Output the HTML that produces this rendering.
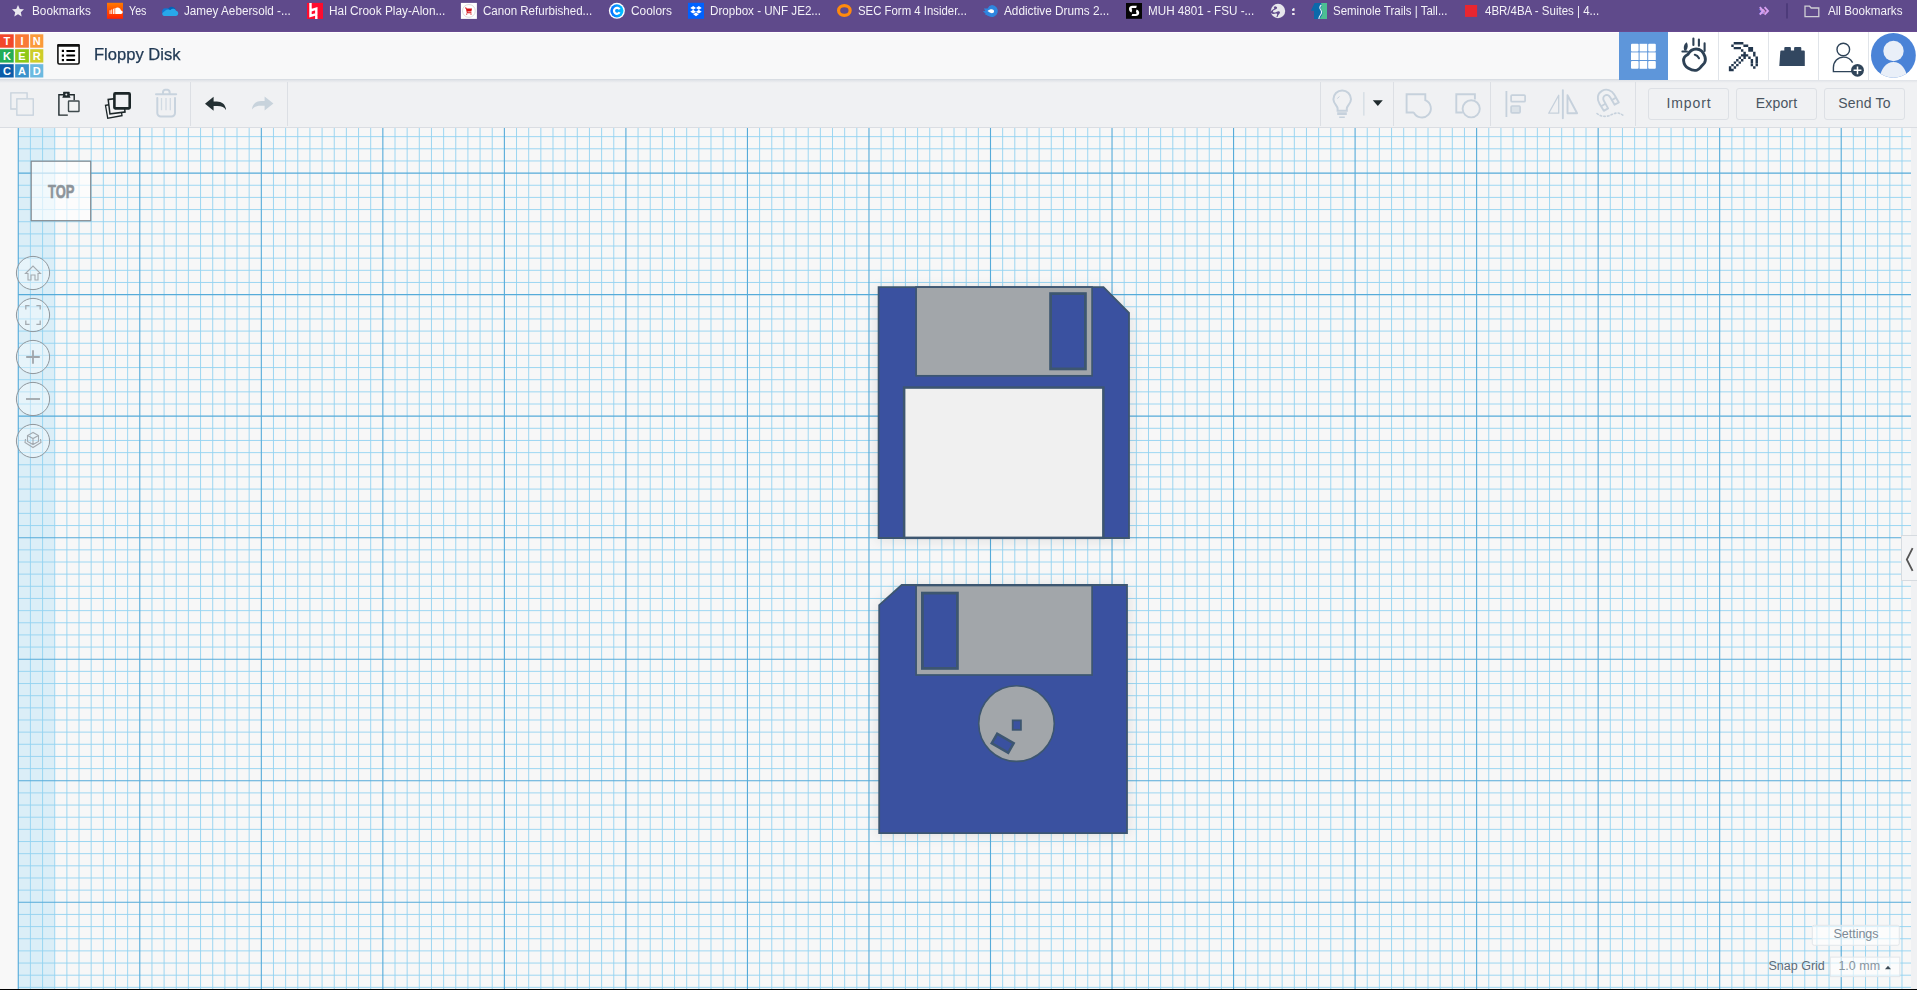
<!DOCTYPE html>
<html><head><meta charset="utf-8">
<style>
*{margin:0;padding:0;box-sizing:border-box}
html,body{width:1917px;height:990px;overflow:hidden;background:#f8f8f8;font-family:"Liberation Sans",sans-serif}
.abs{position:absolute}
#bm{position:absolute;left:0;top:0;width:1917px;height:32px;background:#5f4a8b;border-bottom:1px solid #684a90}
#bm .t{position:absolute;top:5px;transform-origin:0 0;font-size:12px;line-height:12px;color:#f4f2f8;white-space:nowrap}
#bm .ic{position:absolute;top:3px;width:16px;height:16px}
#hdr{position:absolute;left:0;top:32px;width:1917px;height:48px;background:#f8f8f9;border-top:1px solid #fff;border-bottom:1px solid #d9dde3}
#tb{position:absolute;left:0;top:80px;width:1917px;height:48px;background:#f0f1f3;border-bottom:1px solid #dadde2}
.sep{position:absolute;top:82px;width:1px;height:44px;background:#dcdfe4}
#canvas{position:absolute;left:0;top:128px;width:1917px;height:862px;background:#f8f8f8}
.btn{position:absolute;top:88px;height:32px;width:81px;border:1px solid #dde0e5;border-radius:3px;font-size:14px;color:#4a5561;text-align:center;line-height:28px}
</style></head><body>
<div id="bm">
  <div class="t" style="left:32px;transform:scaleX(0.98)">Bookmarks</div>
  <div class="t" style="left:129px;transform:scaleX(0.89)">Yes</div>
  <div class="t" style="left:184px;transform:scaleX(0.975)">Jamey Aebersold -...</div>
  <div class="t" style="left:329px;transform:scaleX(0.986)">Hal Crook Play-Alon...</div>
  <div class="t" style="left:483px;transform:scaleX(0.963)">Canon Refurbished...</div>
  <div class="t" style="left:631px;transform:scaleX(0.99)">Coolors</div>
  <div class="t" style="left:710px;transform:scaleX(0.968)">Dropbox - UNF JE2...</div>
  <div class="t" style="left:858px;transform:scaleX(0.949)">SEC Form 4 Insider...</div>
  <div class="t" style="left:1004px;transform:scaleX(0.981)">Addictive Drums 2...</div>
  <div class="t" style="left:1148px;transform:scaleX(0.972)">MUH 4801 - FSU -...</div>
  <div class="t" style="left:1292px">:</div>
  <div class="t" style="left:1333px;transform:scaleX(0.957)">Seminole Trails | Tall...</div>
  <div class="t" style="left:1485px;transform:scaleX(0.958)">4BR/4BA - Suites | 4...</div>
  <div class="t" style="left:1759px;color:#d8a4f2">»</div>
  <div class="t" style="left:1828px;transform:scaleX(0.971)">All Bookmarks</div>
  <svg class="abs" style="left:0;top:0" width="1917" height="31">
    <defs>
      <linearGradient id="sc" x1="0" y1="0" x2="0" y2="1"><stop offset="0" stop-color="#ff7a00"/><stop offset="1" stop-color="#ff2200"/></linearGradient>
      <linearGradient id="co" x1="0" y1="0" x2="1" y2="0"><stop offset="0" stop-color="#0a6cff"/><stop offset="1" stop-color="#00c4ff"/></linearGradient>
    </defs>
    <!-- star -->
    <path fill="#e9e7ef" d="M18 5l1.75 3.9 4.25.45-3.2 2.85.9 4.2L18 14.25l-3.7 2.15.9-4.2L12 9.35l4.25-.45z"/>
    <!-- soundcloud -->
    <rect x="107" y="2.8" width="16" height="16" fill="url(#sc)"/>
    <path fill="#fff" d="M115.5 14h5.3a1.8 1.8 0 0 0 .2-3.6 3.6 3.6 0 0 0-5.5-2.2z M109.6 10.3h.9v3.6h-.9zM111.3 9.6h.9v4.3h-.9zM113 8.8h.9v5.1h-.9zM114.5 8.3h.8v5.6h-.8z"/>
    <!-- onedrive -->
    <path fill="#0364b8" d="M168.6 8.2a4.3 4.3 0 0 1 7.2 1.6l-5 3.6-4.4-2z"/>
    <path fill="#0f78d4" d="M162.4 13a3.2 3.2 0 0 1 3.3-4.6 4.6 4.6 0 0 1 3.3.6l-1.5 7h-3.2z"/>
    <path fill="#28a8ea" d="M164.2 16a2.2 2.2 0 0 1-1.8-3l3-2.6a4.8 4.8 0 0 1 5.1-.3 3.2 3.2 0 0 1 5.6.6 3 3 0 0 1 1.9 3.8 2.2 2.2 0 0 1-2 1.5z"/>
    <!-- hal crook -->
    <rect x="307" y="2.9" width="16" height="16" fill="#ff0b2e"/>
    <path fill="none" stroke="#fff" stroke-width="2.4" d="M310.5 2.9v13l5.8-1.8V8.7l-5.8 1.8 M316.3 8.7v10.2"/>
    <!-- canon -->
    <rect x="460.9" y="2.9" width="16" height="16" fill="#fff"/>
    <circle cx="468.9" cy="10.9" r="6.4" fill="none" stroke="#dcdcdc" stroke-width="1"/>
    <path fill="#d40f14" d="M465 7.5h1.3l.4 1h5.3l-.6 3h-4l.2.8h3.8v.9h-4.5l-1-4.7h-.9z"/>
    <circle cx="466.7" cy="14.1" r=".7" fill="#d40f14"/><circle cx="471" cy="14.1" r=".7" fill="#d40f14"/>
    <!-- coolors -->
    <circle cx="616.9" cy="10.8" r="8" fill="#fff"/>
    <circle cx="616.9" cy="10.8" r="6.6" fill="url(#co)"/>
    <path fill="none" stroke="#fff" stroke-width="2.2" d="M619.6 9.3a3 3 0 1 0 0 3"/>
    <!-- dropbox -->
    <rect x="688" y="2.8" width="16" height="16" fill="#0061fe"/>
    <path fill="#fff" d="M693.2 6l-2.9 1.9 2.9 1.9 2.8-1.9zM698.8 6l-2.8 1.9 2.8 1.9 2.9-1.9zM690.3 11.7l2.9 1.9 2.8-1.9-2.8-1.9zM698.8 9.8l-2.8 1.9 2.8 1.9 2.9-1.9zM693.2 14.3l2.8 1.9 2.8-1.9-2.8-1.8z"/>
    <!-- sec ring -->
    <ellipse cx="844.35" cy="10.55" rx="5.8" ry="4.9" fill="none" stroke="#ff8a0d" stroke-width="3.2"/>
    <!-- addictive drums -->
    <path fill="#2e86df" d="M992 5a6 6 0 1 1-3 11.3c-1.5-.6-3.5-1.7-4.5-2.5l1.5-.3c-1.2-.6-2.5-1.5-3.2-2.3l2.6-.3c-.6-.7-1.2-1.8-1.2-2.7 1.2.3 2.5.4 3.4.2A6 6 0 0 1 992 5z"/>
    <path fill="#fff" d="M987.5 11c1.5-1.2 3.2-1.9 5-1.6a1.9 1.9 0 0 1 .2 3.7c-1.8.3-3.5-.8-5.2-2.1z"/>
    <!-- muh -->
    <rect x="1126" y="3" width="16" height="15.8" fill="#050505"/>
    <path fill="#fff" d="M1136.8 5.8h-4.2c-2.6 0-3.6 1.6-3.6 3.3 0 1.7 1 2.9 2.6 3.4l.6-2.7c-.5-.3-.6-.7-.6-1 0-.6.5-.9 1.3-.9h3.3zM1131.6 16h3.9c2.6 0 3.7-1.5 3.7-3.2 0-1.8-1.1-3-2.7-3.4l-.6 2.6c.5.3.7.7.7 1 0 .6-.6 1-1.4 1h-3z"/>
    <!-- globe -->
    <circle cx="1278" cy="11" r="7.2" fill="#e7e7ec"/>
    <path fill="#5f4a8b" d="M1275.2 6.2c1.8.5 2.5 1.6 1.5 2.6-1 1-3 .9-3.7 2.2-.5 1 .8 1.7 2 1.5 1.5-.3 2.5-1.5 4-1.2 1.3.3 1.2 1.6.4 2.5-.8.9-1.8 1.9-1.5 3l-1.5.1c.2-1.2 1.2-2.2.6-3-.6-.7-2-.2-3.5 0-1.5.2-3-.8-2.7-2.2.3-1.8 2.5-2.2 3.3-3 .5-.6-.2-1.3-.5-1.7z"/>
    <rect x="1292.1" y="9" width="2.4" height="1.9" fill="#f0eef6"/><rect x="1292.1" y="13" width="2.4" height="1.9" fill="#f0eef6"/>
    <!-- seminole -->
    <path fill="#0b69aa" d="M1314.6 2.9h12.4v16.1h-13v-8.2h-3.1z"/>
    <path fill="#4cbf93" d="M1321 2.9h6v16.1h-7.2c.7-2.5 2.7-3.8 2.7-6.1 0-2-1.5-2.5-1.5-4.5 0-1.5 1.2-2.6 0-5.5z"/>
    <path fill="none" stroke="#e8f4fb" stroke-width="1.1" d="M1321.3 5c-1.7 1.5-1.8 3.4-.5 5 1.2 1.6 1 3.5-.7 5.5-.8 1-1.2 2.2-1.2 3.5"/>
    <!-- red square -->
    <rect x="1465" y="5" width="12.1" height="11.9" fill="#e92630"/>
    <!-- chevrons -->
    <path fill="none" stroke="#d7a0f2" stroke-width="1.9" d="M1759.8 7.2l3.4 3.7-3.4 3.7M1764.6 7.2l3.4 3.7-3.4 3.7"/>
    <rect x="1786.2" y="3.3" width="1.6" height="15.2" fill="#4a3877"/>
    <!-- folder -->
    <path fill="none" stroke="#cfcfd4" stroke-width="1.3" d="M1805 6.2h4.6l1.6 1.8h7.6v8.6h-13.8z"/>
  </svg>
</div>

<div id="hdr"></div>
<div class="abs" style="left:1668px;top:32px;width:250px;height:48px;background:#fff"></div>
<div class="abs" style="left:1619px;top:32px;width:49px;height:48px;background:#5e96da"></div>
<div class="abs" style="left:94.3px;top:45px;font-size:17px;line-height:20px;color:#223a55;white-space:nowrap;transform:scaleX(0.975);transform-origin:0 0;-webkit-text-stroke:0.25px #223a55">Floppy Disk</div>
<svg class="abs" style="left:0;top:0" width="1917" height="130">
  <!-- logo -->
  <g font-family="Liberation Sans" font-weight="bold" font-size="11" fill="#fff" text-anchor="middle">
    <rect x="-0.5" y="34.3" width="14.2" height="13.4" fill="#f2472b"/>
    <rect x="15.15" y="34.3" width="13.75" height="13.4" fill="#f97a36"/>
    <rect x="30.2" y="34.3" width="13.1" height="13.4" fill="#fb9a3a"/>
    <rect x="-0.5" y="49.2" width="14.2" height="13.4" fill="#24ad56"/>
    <rect x="15.15" y="49.2" width="13.75" height="13.4" fill="#8dc817"/>
    <rect x="30.2" y="49.2" width="13.1" height="13.4" fill="#cecd2a"/>
    <rect x="-0.5" y="64.2" width="14.2" height="13.3" fill="#0b5ca9"/>
    <rect x="15.15" y="64.2" width="13.75" height="13.3" fill="#3b93cc"/>
    <rect x="30.2" y="64.2" width="13.1" height="13.3" fill="#6cb9e0"/>
    <text x="6.9" y="45.2">T</text><text x="22" y="45.2">I</text><text x="36.8" y="45.2">N</text>
    <text x="6.9" y="60.1">K</text><text x="22" y="60.1">E</text><text x="36.8" y="60.1">R</text>
    <text x="6.9" y="75.1">C</text><text x="22" y="75.1">A</text><text x="36.8" y="75.1">D</text>
  </g>
  <!-- list icon -->
  <rect x="57.9" y="45.2" width="21.2" height="18.8" rx="1.5" fill="#fff" stroke="#111" stroke-width="1.6"/>
  <rect x="57.1" y="44.1" width="22.8" height="2.6" rx="1" fill="#111"/>
  <g fill="#000">
    <rect x="61.8" y="49.8" width="2.2" height="2.2"/><rect x="61.8" y="54.5" width="2.2" height="2.2"/><rect x="61.8" y="59" width="2.2" height="2.2"/>
    <rect x="66.2" y="49.9" width="9" height="2" rx="0.8"/><rect x="66.2" y="54.6" width="9" height="2" rx="0.8"/><rect x="66.2" y="59.1" width="9" height="2" rx="0.8"/>
  </g>
  <!-- grid button icon -->
  <g fill="#fff">
    <rect x="1631" y="43.8" width="7.6" height="7.6" rx="1"/><rect x="1639.6" y="43.8" width="7.6" height="7.6"/><rect x="1648.2" y="43.8" width="7.6" height="7.6" rx="1"/>
    <rect x="1631" y="52.4" width="7.6" height="7.6"/><rect x="1639.6" y="52.4" width="7.6" height="7.6"/><rect x="1648.2" y="52.4" width="7.6" height="7.6"/>
    <rect x="1631" y="61" width="7.6" height="7.8" rx="1"/><rect x="1639.6" y="61" width="7.6" height="7.8"/><rect x="1648.2" y="61" width="7.6" height="7.8" rx="1"/>
  </g>
  <!-- separators -->
  <g fill="#e0e4e9">
    <rect x="1718" y="32" width="1" height="48"/><rect x="1768" y="32" width="1" height="48"/><rect x="1818" y="32" width="1" height="48"/><rect x="1868" y="32" width="1" height="48"/>
  </g>
  <!-- apple falling -->
  <g fill="none" stroke="#2d4155" stroke-width="2.9" stroke-linecap="round" stroke-linejoin="round">
    <path d="M1687.8 54.5c2-3.5 5-5.5 8.3-5.5 4.5 0 7.5 3.5 8.8 7.5.8 2.5.5 5-.5 6.5-.7 1-1.5 1.8-2.5 2.8-1.5 1.5-2.5 3.5-5 4.3-2.5.7-6-.3-8.5-1.8-2.5-1.5-4.5-4.5-4.8-7.5-.2-2.8 1.5-5 4.2-6.3z"/>
  </g>
  <g fill="none" stroke="#2d4155" stroke-width="2.1" stroke-linecap="round">
    <path d="M1693.4 38.6v6.4M1698.9 39.6v6.2M1704.6 43.4v7.6"/>
    <path d="M1694.8 54.8c1.8.4 3.3 1.7 4.2 3.4"/>
    <path d="M1682.4 51.5h4.5"/>
  </g>
  <path d="M1684.3 50.5c-1.2-3-.3-6.5 2.5-8.2 1.5 2.8 1.3 6.5-1 8.5z" fill="#2d4155"/>
  <!-- pickaxe -->
  <path fill="#22364d" d="M1733.70 42.06h2.424v2.424h-2.424zM1736.12 42.06h2.424v2.424h-2.424zM1738.55 42.06h2.424v2.424h-2.424zM1740.97 42.06h2.424v2.424h-2.424zM1731.27 44.48h2.424v2.424h-2.424zM1743.39 44.48h2.424v2.424h-2.424zM1745.82 44.48h2.424v2.424h-2.424zM1733.70 46.91h2.424v2.424h-2.424zM1736.12 46.91h2.424v2.424h-2.424zM1738.55 46.91h2.424v2.424h-2.424zM1748.24 46.91h2.424v2.424h-2.424zM1750.67 46.91h2.424v2.424h-2.424zM1740.97 49.33h2.424v2.424h-2.424zM1748.24 49.33h2.424v2.424h-2.424zM1750.67 49.33h2.424v2.424h-2.424zM1743.39 51.76h2.424v2.424h-2.424zM1753.09 51.76h2.424v2.424h-2.424zM1740.97 54.18h2.424v2.424h-2.424zM1743.39 54.18h2.424v2.424h-2.424zM1745.82 54.18h2.424v2.424h-2.424zM1753.09 54.18h2.424v2.424h-2.424zM1738.55 56.61h2.424v2.424h-2.424zM1743.39 56.61h2.424v2.424h-2.424zM1748.24 56.61h2.424v2.424h-2.424zM1755.52 56.61h2.424v2.424h-2.424zM1736.12 59.03h2.424v2.424h-2.424zM1740.97 59.03h2.424v2.424h-2.424zM1750.67 59.03h2.424v2.424h-2.424zM1755.52 59.03h2.424v2.424h-2.424zM1733.70 61.45h2.424v2.424h-2.424zM1738.55 61.45h2.424v2.424h-2.424zM1750.67 61.45h2.424v2.424h-2.424zM1755.52 61.45h2.424v2.424h-2.424zM1731.27 63.88h2.424v2.424h-2.424zM1736.12 63.88h2.424v2.424h-2.424zM1750.67 63.88h2.424v2.424h-2.424zM1755.52 63.88h2.424v2.424h-2.424zM1728.85 66.30h2.424v2.424h-2.424zM1733.70 66.30h2.424v2.424h-2.424zM1753.09 66.30h2.424v2.424h-2.424zM1728.85 68.73h2.424v2.424h-2.424zM1731.27 68.73h2.424v2.424h-2.424z"/>
  <!-- brick -->
  <path fill="#324760" d="M1780.3 51.5a1 1 0 0 1 1-1h3v-2.6a1 1 0 0 1 1-1h4.6a1 1 0 0 1 1 1v2.6h3.2v-2.6a1 1 0 0 1 1-1h5.2a1 1 0 0 1 1 1v2.6h2.5a1 1 0 0 1 1 1v14.5h-25.5z"/>
  <!-- user add -->
  <g fill="none" stroke="#2f4459" stroke-width="1.4">
    <circle cx="1843.3" cy="49.5" r="6.3"/>
    <path d="M1853.4 71.6h-20v-4c0-6 4.6-10.5 10-10.5 4.2 0 7.5 2.2 9.2 5.5"/>
  </g>
  <circle cx="1857.5" cy="70.3" r="6.4" fill="#2f4459"/>
  <path d="M1857.5 66.4v7.8M1853.6 70.3h7.8" stroke="#fff" stroke-width="1.5"/>
  <!-- avatar -->
  <circle cx="1893.4" cy="55.4" r="22.4" fill="#4a83d7"/>
  <clipPath id="av"><circle cx="1893.4" cy="55.4" r="22.4"/></clipPath>
  <g clip-path="url(#av)" fill="#e9eff8">
    <circle cx="1893.5" cy="51" r="10.2"/>
    <ellipse cx="1893.5" cy="79" rx="13.5" ry="17"/>
  </g>
</svg>
<div id="tb"></div>
<div class="abs" style="left:0;top:80px;width:1917px;height:3px;background:linear-gradient(#dfe2e7,#f0f1f3)"></div>
<div class="sep" style="left:190px"></div><div class="sep" style="left:287px"></div>
<div class="sep" style="left:1320px"></div><div class="sep" style="left:1393px"></div><div class="sep" style="left:1490px"></div><div class="sep" style="left:1635px"></div>
<svg class="abs" style="left:0;top:0" width="1917" height="130">
  <!-- copy (disabled) -->
  <g fill="none" stroke="#c6d1dc" stroke-width="1.3">
    <path d="M16.2 109H10.85V92.85H27.1V98.2"/>
    <rect x="16.85" y="98.85" width="16.4" height="16.3"/>
  </g>
  <!-- paste -->
  <g fill="none" stroke="#1f2a2d" stroke-width="1.4">
    <path d="M67.8 115.1H58.9V94.8H74.2V100.3"/>
  </g>
  <path d="M62.3 97.8l.8-2V92.3a.5.5 0 0 1 .5-.5h5.6a.5.5 0 0 1 .5.5v3.5l.8 2z" fill="#1f2a2d"/>
  <circle cx="66.3" cy="94.4" r="1" fill="#e8e9eb"/>
  <rect x="68.5" y="101" width="10.5" height="10.5" rx="0.6" fill="#f3f4f5" stroke="#3f4a4d" stroke-width="1.4"/>
  <!-- duplicate -->
  <rect x="106.5" y="104" width="14.5" height="13" transform="rotate(-10 113.7 110.5)" fill="#f3f4f5" stroke="#1c2628" stroke-width="1.3"/>
  <rect x="109" y="98.5" width="15.2" height="14.5" transform="rotate(-7 116.6 105.7)" fill="#f3f4f5" stroke="#1c2628" stroke-width="1.5"/>
  <rect x="114.4" y="93.4" width="15.3" height="15" rx="0.8" fill="#f0f1f3" stroke="#1c2628" stroke-width="2.6"/>
  <!-- trash (disabled) -->
  <g fill="none" stroke="#c8d3de" stroke-width="2" stroke-linecap="round">
    <path d="M156 94.3h20.2"/>
    <path d="M163 93.8v-1.8a2.2 2.2 0 0 1 2.2-2.2h2.2a2.2 2.2 0 0 1 2.2 2.2v1.8"/>
    <path d="M157.3 98v15a3.5 3.5 0 0 0 3.5 3.5h10.7a3.5 3.5 0 0 0 3.5-3.5V98"/>
  </g>
  <g stroke="#d1dae3" stroke-width="1.3"><path d="M161.5 98v12.3M166 98v12.3M170.3 98v12.3"/></g>
  <!-- undo -->
  <path fill="#243033" d="M205 103.8l8.6-7v4.7h3.2c5 0 8.5 2.8 9.2 7.6l-.1.8c-1.3-2.3-4-3.8-8.5-3.8h-3.8v4.6z"/>
  <!-- redo -->
  <path fill="#c8d3dc" d="M273.4 103.4l-8.8-6.8v4.5h-3.4c-5 .1-8.5 2.8-9.2 7.6l.1.8c1.6-2.4 4.4-3.7 8.7-3.7h3.8v4.6z"/>
  <!-- bulb -->
  <g fill="none" stroke="#c6d1dc" stroke-width="2">
    <path d="M1337.6 110.8v-2.3c0-2.5-4.2-4.8-4.2-9.3a8.8 8.8 0 0 1 17.6 0c0 4.5-4.2 6.8-4.2 9.3v2.3z"/>
  </g>
  <path d="M1337.2 112.3h9.6v2.8h-9.6zM1339.2 116.6h5.6v1.4h-5.6z" fill="#c6d1dc"/>
  <path d="M1337.3 98.5l2.2-2" stroke="#c6d1dc" stroke-width="1"/>
  <rect x="1363.2" y="92.1" width="1.3" height="23.5" fill="#d3dbe3"/>
  <path d="M1372.8 100.2h10l-5 5.8z" fill="#1f2a2d"/>
  <!-- group -->
  <path fill="none" stroke="#c6d1dc" stroke-width="1.9" d="M1413.8 112.5h-7.2V94.2h18.7v6.8 M1425.3 100.2a9 9 0 1 1-11.5 12.3"/>
  <!-- ungroup -->
  <g fill="none" stroke="#c6d1dc" stroke-width="1.9">
    <path d="M1462.8 112.5h-6.5V94.2h18.6v5.3"/>
    <circle cx="1471.2" cy="108.8" r="8.6"/>
  </g>
  <!-- align -->
  <g fill="#c6d1dc">
    <rect x="1505.5" y="91" width="1.8" height="26"/>
  </g>
  <rect x="1511.1" y="95.1" width="14" height="6.6" rx="1" fill="none" stroke="#c6d1dc" stroke-width="1.7"/>
  <rect x="1511.1" y="106" width="9" height="6.8" rx="1" fill="#dbe2e8" stroke="#c6d1dc" stroke-width="1.7"/>
  <!-- mirror -->
  <rect x="1561.9" y="89.2" width="1.9" height="30" rx="0.9" fill="#c6d1dc"/>
  <path d="M1558.7 95.2v18h-10z" fill="none" stroke="#c6d1dc" stroke-width="1.3" stroke-linejoin="round"/>
  <path d="M1567.5 95.2v18h9.6z" fill="none" stroke="#c6d1dc" stroke-width="1.9" stroke-linejoin="round"/>
  <!-- magnet -->
  <g fill="none" stroke="#c6d1dc" stroke-width="1.9" stroke-linejoin="round">
    <path d="M1603.8 110.8l-4.3-7c-3-5-2-10.5 2.5-13 4.5-2.5 9.8-.8 12.4 4l4.4 7.6-4.2 2.3-4.3-7.3c-1.3-2.2-3.6-3-5.4-1.9-1.8 1-2.2 3.4-.9 5.6l4.1 7.3z"/>
    <path d="M1601.2 106.3l4.2-2.5M1611.5 100.3l4.2-2.4"/>
  </g>
  <path d="M1597 113.5c3 2.5 7 3.5 11 2.5 3.5-1 6-3 9-3 3 0 5 1.5 7 3" fill="none" stroke="#c6d1dc" stroke-width="1.6" stroke-dasharray="1.5 2.2" stroke-linecap="round"/>
</svg>

<div id="canvas">
  <svg class="abs" style="left:0;top:-128px" width="1917" height="990">
    <rect x="18" y="128" width="1893" height="861" fill="#f7f7f7"/>
    <rect x="18" y="128" width="36.6" height="861" fill="#dbeef7"/>
    <path d="M30.41 128V989M42.57 128V989M54.72 128V989M66.87 128V989M79.03 128V989M91.18 128V989M103.33 128V989M115.48 128V989M127.64 128V989M151.94 128V989M164.10 128V989M176.25 128V989M188.40 128V989M200.56 128V989M212.71 128V989M224.86 128V989M237.01 128V989M249.17 128V989M273.47 128V989M285.63 128V989M297.78 128V989M309.93 128V989M322.08 128V989M334.24 128V989M346.39 128V989M358.54 128V989M370.70 128V989M395.00 128V989M407.16 128V989M419.31 128V989M431.46 128V989M443.62 128V989M455.77 128V989M467.92 128V989M480.07 128V989M492.23 128V989M516.53 128V989M528.69 128V989M540.84 128V989M552.99 128V989M565.14 128V989M577.30 128V989M589.45 128V989M601.60 128V989M613.76 128V989M638.06 128V989M650.22 128V989M662.37 128V989M674.52 128V989M686.68 128V989M698.83 128V989M710.98 128V989M723.13 128V989M735.29 128V989M759.59 128V989M771.75 128V989M783.90 128V989M796.05 128V989M808.21 128V989M820.36 128V989M832.51 128V989M844.66 128V989M856.82 128V989M881.12 128V989M893.28 128V989M905.43 128V989M917.58 128V989M929.74 128V989M941.89 128V989M954.04 128V989M966.19 128V989M978.35 128V989M1002.65 128V989M1014.81 128V989M1026.96 128V989M1039.11 128V989M1051.27 128V989M1063.42 128V989M1075.57 128V989M1087.72 128V989M1099.88 128V989M1124.18 128V989M1136.34 128V989M1148.49 128V989M1160.64 128V989M1172.80 128V989M1184.95 128V989M1197.10 128V989M1209.25 128V989M1221.41 128V989M1245.71 128V989M1257.87 128V989M1270.02 128V989M1282.17 128V989M1294.33 128V989M1306.48 128V989M1318.63 128V989M1330.78 128V989M1342.94 128V989M1367.24 128V989M1379.40 128V989M1391.55 128V989M1403.70 128V989M1415.86 128V989M1428.01 128V989M1440.16 128V989M1452.31 128V989M1464.47 128V989M1488.77 128V989M1500.93 128V989M1513.08 128V989M1525.23 128V989M1537.38 128V989M1549.54 128V989M1561.69 128V989M1573.84 128V989M1586.00 128V989M1610.30 128V989M1622.46 128V989M1634.61 128V989M1646.76 128V989M1658.91 128V989M1671.07 128V989M1683.22 128V989M1695.37 128V989M1707.53 128V989M1731.83 128V989M1743.99 128V989M1756.14 128V989M1768.29 128V989M1780.45 128V989M1792.60 128V989M1804.75 128V989M1816.90 128V989M1829.06 128V989M1853.36 128V989M1865.52 128V989M1877.67 128V989M1889.82 128V989M1901.98 128V989M18 136.64H1911M18 148.79H1911M18 160.95H1911M18 185.25H1911M18 197.41H1911M18 209.56H1911M18 221.71H1911M18 233.87H1911M18 246.02H1911M18 258.17H1911M18 270.32H1911M18 282.48H1911M18 306.78H1911M18 318.94H1911M18 331.09H1911M18 343.24H1911M18 355.39H1911M18 367.55H1911M18 379.70H1911M18 391.85H1911M18 404.01H1911M18 428.31H1911M18 440.47H1911M18 452.62H1911M18 464.77H1911M18 476.92H1911M18 489.08H1911M18 501.23H1911M18 513.38H1911M18 525.54H1911M18 549.84H1911M18 562.00H1911M18 574.15H1911M18 586.30H1911M18 598.46H1911M18 610.61H1911M18 622.76H1911M18 634.91H1911M18 647.07H1911M18 671.37H1911M18 683.53H1911M18 695.68H1911M18 707.83H1911M18 719.99H1911M18 732.14H1911M18 744.29H1911M18 756.44H1911M18 768.60H1911M18 792.90H1911M18 805.06H1911M18 817.21H1911M18 829.36H1911M18 841.52H1911M18 853.67H1911M18 865.82H1911M18 877.97H1911M18 890.13H1911M18 914.43H1911M18 926.59H1911M18 938.74H1911M18 950.89H1911M18 963.05H1911M18 975.20H1911M18 987.35H1911" stroke="#93d3f0" stroke-width="0.9" fill="none"/>
    <path d="M18.26 128V989M139.79 128V989M261.32 128V989M382.85 128V989M504.38 128V989M625.91 128V989M747.44 128V989M868.97 128V989M990.50 128V989M1112.03 128V989M1233.56 128V989M1355.09 128V989M1476.62 128V989M1598.15 128V989M1719.68 128V989M1841.21 128V989M18 173.10H1911M18 294.63H1911M18 416.16H1911M18 537.69H1911M18 659.22H1911M18 780.75H1911M18 902.28H1911" stroke="#56abd9" stroke-width="1.1" fill="none"/>
    <rect x="0" y="989" width="1917" height="1" fill="#000"/>
  </svg>
</div>

<svg class="abs" style="left:0;top:0" width="1917" height="990">
  <defs>
    <filter id="sh" x="-20%" y="-20%" width="140%" height="140%"><feGaussianBlur stdDeviation="7"/></filter>
  </defs>
  <!-- shadows -->
  <g fill="#000" opacity="0.085" filter="url(#sh)">
    <path d="M876 288H1104L1131 314V541H876Z"/>
    <path d="M877 606L901 586H1129V836H877Z"/>
  </g>
  <g stroke="#3d5670" stroke-linejoin="miter">
    <!-- disk 1 -->
    <path d="M878.6 287.2H1103.5L1129 312.8V538H878.6Z" fill="#3a51a0" stroke-width="1.8"/>
    <rect x="916.1" y="287.1" width="176" height="88.7" fill="#a2a6aa" stroke-width="1.7"/>
    <rect x="1050.6" y="293.6" width="34.8" height="75.3" fill="#3a51a0" stroke-width="2.8"/>
    <rect x="904.15" y="387.55" width="199.2" height="150.3" fill="#f0f0f0" stroke-width="2.5"/>
    <!-- disk 2 -->
    <path d="M879.2 605.1L901.7 585H1127V833.2H879.2Z" fill="#3a51a0" stroke-width="1.8"/>
    <rect x="916.1" y="585.5" width="176" height="89.5" fill="#a2a6aa" stroke-width="1.7"/>
    <rect x="922.4" y="593.1" width="35" height="75.3" fill="#3a51a0" stroke-width="2.8"/>
    <circle cx="1016.5" cy="723.6" r="37.8" fill="#a2a6aa" stroke-width="1.6"/>
    <rect x="1012.7" y="720.4" width="8.2" height="9.4" fill="#3a51a0" stroke-width="1.8"/>
    <rect x="-9.5" y="-5.5" width="19" height="11" transform="translate(1002.7 743.25) rotate(29.9)" fill="#3a51a0" stroke-width="2.5"/>
  </g>
</svg>
<div id="canvas-ui">
<svg class="abs" style="left:0;top:0" width="1917" height="990">
  <!-- view cube -->
  <rect x="31.2" y="161.2" width="59.5" height="59.5" fill="#ffffff" fill-opacity="0.62" stroke="#838a90" stroke-width="1.2"/>
  <text x="61.3" y="197.8" style="font-family:'Liberation Sans';font-weight:700;font-size:17.5px" fill="#8d949a" stroke="#8d949a" stroke-width="0.6" text-anchor="middle" transform="translate(61.3 0) scale(0.74 1) translate(-61.3 0)">TOP</text>
  <!-- nav buttons -->
  <g fill="#ffffff" fill-opacity="0.35" stroke="#8f979d" stroke-width="1">
    <circle cx="33" cy="273" r="16.6"/>
    <circle cx="33" cy="315" r="16.6"/>
    <circle cx="33" cy="357" r="16.6"/>
    <circle cx="33" cy="399" r="16.6"/>
    <circle cx="33" cy="441" r="16.6"/>
  </g>
  <g fill="none" stroke="#a3aab0" stroke-width="1.1">
    <path d="M25.5 273.5L33 266l7.5 7.5h-2.5V280h-3v-5h-4v5h-3v-6.5z"/>
    <path d="M25.8 309.5v-3.8h3.8M36.4 305.7h3.8v3.8M40.2 320.5v3.8h-3.8M29.6 324.3h-3.8v-3.8" stroke-width="1.3"/>
    <path d="M33 350.2v13.6M26.2 357h13.6" stroke-width="1.8" stroke="#a0a6ab"/>
    <path d="M26 399h14" stroke-width="1.8" stroke="#a0a6ab"/>
    <path d="M33 432.5l-5.5 3v6l5.5 3 5.5-3v-6zM27.5 435.5l5.5 3 5.5-3M33 438.5v6M25.5 439l-0.5 3.5 8 5 8-5-0.5-3.5"/>
  </g>
  <!-- settings -->
  <rect x="1812.3" y="925.3" width="87" height="20" rx="2" fill="#ffffff" fill-opacity="0.6" stroke="#e2e6ea" stroke-width="1"/>
  <text x="1856" y="938.3" font-family="Liberation Sans" font-size="12.5" fill="#7b8a96" text-anchor="middle">Settings</text>
  <text x="1768.5" y="970" font-family="Liberation Sans" font-size="12.5" fill="#5d6d7a">Snap Grid</text>
  <rect x="1830.2" y="957.1" width="69.6" height="19.5" fill="#ffffff" fill-opacity="0.6" stroke="#e2e6ea" stroke-width="1"/>
  <text x="1838.4" y="970" font-family="Liberation Sans" font-size="12.5" fill="#8a969f">1.0 mm</text>
  <path d="M1885 969.2l3-3.5 3 3.5z" fill="#3d4a55"/>
</svg>
<div class="abs" style="left:1911px;top:128px;width:6px;height:861px;background:#f0f1f3"></div>
<div class="abs" style="left:1901px;top:535.4px;width:16px;height:46px;background:#f3f4f6;border:1px solid #d6dbe0;border-right:none"></div>
<svg class="abs" style="left:1900px;top:540px" width="17" height="36"><path d="M12.6 8.2L6.8 19.5l5.8 11.3" fill="none" stroke="#555" stroke-width="1.8"/></svg>
</div>
<div class="btn" style="left:1648px;letter-spacing:0.9px;text-indent:0.9px">Import</div>
<div class="btn" style="left:1736px;letter-spacing:0.2px">Export</div>
<div class="btn" style="left:1824px;letter-spacing:0.2px">Send To</div>

</body></html>
